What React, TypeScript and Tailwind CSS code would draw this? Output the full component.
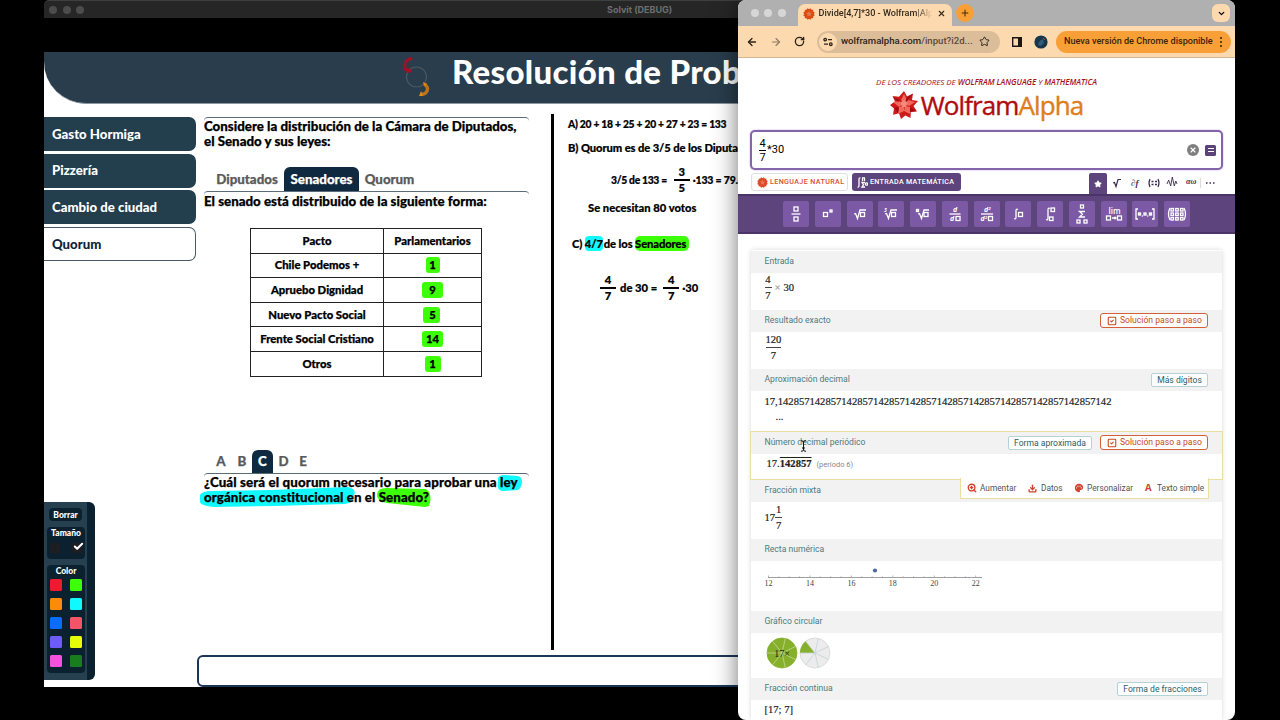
import { useState, type ReactNode } from 'react'
import clsx from 'clsx'
import {
  ArrowLeft,
  ArrowRight,
  Check,
  ChevronDown,
  Download,
  Plus,
  RotateCw,
  SquareCheck,
  Star,
  X,
  ZoomIn,
} from 'lucide-react'
import { MdPalette } from 'react-icons/md'

const lessons = ['Gasto Hormiga', 'Pizzería', 'Cambio de ciudad', 'Quorum']

const senate = [
  { pact: 'Chile Podemos +', seats: '1', mark: 'w-[14px]' },
  { pact: 'Apruebo Dignidad', seats: '9', mark: 'w-[21px]' },
  { pact: 'Nuevo Pacto Social', seats: '5', mark: 'w-[17px] -ml-[3px] pl-[3px]' },
  { pact: 'Frente Social Cristiano', seats: '14', mark: 'w-[21px]' },
  { pact: 'Otros', seats: '1', mark: 'w-[16px]' },
]

const swatches = [
  'bg-[#f01a30]', 'bg-[#3cff08]',
  'bg-[#fb8b08]', 'bg-[#12f8ff]',
  'bg-[#0a6cff]', 'bg-[#f45468]',
  'bg-[#6d5cfa]', 'bg-[#e6ff08]',
  'bg-[#f551dd]', 'bg-[#187d1c]',
]

/* ---------- Solvit ---------- */

function SolvitFraction({ top, bottom }: { top: string; bottom: string }) {
  return (
    <span className="inline-flex w-4 shrink-0 flex-col items-center leading-[12px]">
      <span className="h-[13px]">{top}</span>
      <span className="h-[2px] w-full bg-black" />
      <span className="pt-px">{bottom}</span>
    </span>
  )
}

// Thin rule with both ends curling down, drawn above each block of text.
function CurledRule() {
  return <div className="h-1 w-[325px] rounded-t-[4px] border-t border-[#5b6b78]" />
}

function SolvitHeader() {
  return (
    <header className="flex h-[52px] items-start rounded-bl-[42px] border-b border-[#8b969e] bg-[#293d4c] pl-[357px]">
      <svg width="30" height="44" viewBox="0 0 30 44" className="mt-[3px] shrink-0" fill="none">
        <circle cx="15.500" cy="22" r="10" stroke="#4b5962" strokeWidth="1.2" />
        <path d="M11 3.500 7 4.500 4.500 7.500 3.500 11l1 3 2.500 3" stroke="#a80f22" strokeWidth="3" strokeDasharray="4 .5" />
        <path d="M8 11.500 6 18l5-1z" fill="#a80f22" />
        <path d="M23.500 29c5 4 3.500 10-3.500 10.500" stroke="#bd7315" strokeWidth="3.4" />
        <path d="m18 41 2-5 2 5zM22 27l1 4 3-2z" fill="#e08a13" />
      </svg>
      <h1 className="ml-[21px] text-[33px] leading-[39px] font-black tracking-[0.3px] whitespace-nowrap text-white">
        Resolución de Problemas
      </h1>
    </header>
  )
}

function DrawPalette() {
  return (
    <div className="mt-auto mb-[7px] h-[178px] w-[51px] rounded-r-[6px] border-r-8 border-[#0b2130] bg-[#26404f] px-[3px] py-[6px] text-center text-[8.5px] font-black text-white">
      <button className="ml-[2px] block h-[13px] w-[33px] rounded-[4px] bg-[#0b2130] leading-[12px]">Borrar</button>
      <div className="mt-[6px] h-[32px] w-[38px] rounded-[4px] bg-[#0b2130] leading-[12px]">
        Tamaño
        <div className="mt-[4px] flex justify-between px-[3px]">
          <span className="h-[10px] w-[10px] bg-[#1d1d22]" />
          <span className="h-[10px] w-[10px] bg-[#1d1d22]">
            <Check size={11} strokeWidth={4.5} className="-mt-[2px] ml-px" />
          </span>
        </div>
      </div>
      <div className="mt-[6px] h-[108px] w-[38px] rounded-[4px] bg-[#0b2130] leading-[13px]">
        Color
        <div className="mt-px grid grid-cols-2 gap-y-[7px] px-[3px]">
          {swatches.map((color, i) => (
            <span key={color} className={clsx('h-3 w-3 rounded-[1.5px]', color, i % 2 === 1 && 'justify-self-end')} />
          ))}
        </div>
      </div>
    </div>
  )
}

function Sidebar() {
  const [active, setActive] = useState('Quorum')
  return (
    <nav className="flex w-[152px] flex-col pt-[13px]">
      {lessons.map((lesson) => (
        <button
          key={lesson}
          onClick={() => setActive(lesson)}
          className={clsx(
            'mb-[2.7px] h-[34px] shrink-0 rounded-r-[7px] pt-px pl-2 text-left text-[13.2px] font-black',
            lesson === active
              ? 'border border-l-0 border-[#4a5b6b] bg-white text-[#0d2438]'
              : 'bg-[#233e4d] text-white',
          )}
        >
          {lesson}
        </button>
      ))}
      <DrawPalette />
    </nav>
  )
}

function SenateTable() {
  return (
    <table className="mt-[19px] ml-[46px] w-[232px] table-fixed border-collapse text-center text-[11.3px] font-black">
      <tbody>
        <tr className="h-[24.6px]">
          <td className="w-[133px] border border-[#222] p-0">Pacto</td>
          <td className="border border-[#222] p-0">Parlamentarios</td>
        </tr>
        {senate.map((row) => (
          <tr key={row.pact} className="h-[24.6px]">
            <td className="border border-[#222] p-0 leading-4">{row.pact}</td>
            <td className="border border-[#222] p-0 leading-4">
              <span className={clsx('inline-block h-4 rounded-[3px] bg-[#3cff08]', row.mark)}>{row.seats}</span>
            </td>
          </tr>
        ))}
      </tbody>
    </table>
  )
}

function Exercise() {
  return (
    <section className="w-[348px] pt-[13px] pl-[8px] text-[13.3px] leading-[15px] font-black [-webkit-text-stroke:0.25px]">
      <CurledRule />
      <p className="-mt-[2px] h-[48px] whitespace-nowrap">
        Considere la distribución de la Cámara de Diputados,
        <br />
        el Senado y sus leyes:
      </p>
      <div className="flex h-6 pl-[6px] leading-6 text-[#5a5a5a]">
        <span className="w-[74px] text-center">Diputados</span>
        <span className="w-[75px] rounded-t-[6px] bg-[#0f2a40] text-center text-white">Senadores</span>
        <span className="w-[61px] text-center">Quorum</span>
      </div>
      <CurledRule />
      <p className="-mt-px whitespace-nowrap">El senado está distribuido de la siguiente forma:</p>
      <SenateTable />
      <div className="mt-[73px] flex h-[23px] pl-[6px] text-center leading-[22px] text-[#5a5a5a]">
        <span className="w-[22px]">A</span>
        <span className="w-[20px]">B</span>
        <span className="w-[21px] rounded-t-[6px] bg-[#0f2a40] text-white">C</span>
        <span className="w-[21px]">D</span>
        <span className="w-[18px]">E</span>
      </div>
      <CurledRule />
      <div className="relative -mt-[2px] whitespace-nowrap">
        {/* marker strokes sit under the text */}
        <svg width="332" height="40" viewBox="0 0 332 40" className="absolute -top-px -left-[5px]">
          <path d="M299 4q1-3 6-3l14 1q4 1 4 6t-4 8l-14 1q-6 0-6-4z" fill="#12f8ff" />
          <path d="M1 21q2-4 12-4l60-1 76-3q9 2 6 8 0 8-9 9l-70 2-60 1q-16-1-15-6z" fill="#12f8ff" />
          <path d="M178 20q1-6 9-6l40 1 3 3q3 6 0 14l-4 1-38-4q-11-2-10-9z" fill="#3cff08" />
        </svg>
        <p className="relative">
          <span className="tracking-[0.12px]">¿Cuál será el quorum necesario para aprobar una ley</span>
          <br />
          <span className="tracking-[0.08px]">orgánica constitucional en el Senado?</span>
        </p>
      </div>
    </section>
  )
}

function Solution() {
  return (
    <section className="h-[536px] w-[200px] shrink-0 border-l-[3px] border-black pt-[2px] pl-[14px] text-[11.2px] leading-4 font-black whitespace-nowrap [-webkit-text-stroke:0.2px]">
      <p className="text-[10.3px] tracking-[-0.25px]">A) 20 + 18 + 25 + 20 + 27 + 23 = 133</p>
      <p className="mt-2 tracking-[-0.1px]">B) Quorum es de 3/5 de los Diputados</p>
      <p className="mt-[8px] flex h-8 items-center pl-[43px]">
        <span className="text-[10.3px] tracking-[-0.3px]">3/5 de 133 =</span>
        <span className="w-[7px]" />
        <SolvitFraction top="3" bottom="5" />
        <span className="w-[3px]" />
        <span className="text-[10.5px] tracking-[-0.2px]">·133 = 79.8</span>
      </p>
      <p className="mt-1 pl-[20px]">Se necesitan 80 votos</p>
      <p className="mt-5 pl-[4px] tracking-[-0.1px]">
        C) <span className="rounded-[4px] bg-[#12f8ff] py-px">4/7</span>
        <span className="ml-px">de los </span>
        <span className="rounded-[5px] bg-[#3cff08] py-px pr-[3px]">Senadores</span>
      </p>
      <p className="mt-5 flex h-8 items-center pl-[32px]">
        <SolvitFraction top="4" bottom="7" />
        <span className="w-[4px]" />
        de 30 =<span className="w-[6px]" />
        <SolvitFraction top="4" bottom="7" />
        <span className="w-[3px]" />
        ·30
      </p>
    </section>
  )
}

function SolvitWindow() {
  return (
    <main className="absolute top-0 left-[44px] flex h-[687px] w-[860px] flex-col overflow-hidden bg-black font-['Lato',sans-serif] text-black">
      <div className="flex h-[18px] shrink-0 items-center rounded-tl-[5px] border-t border-[#3c4040] bg-[#262626] pl-[5px]">
        <span className="mr-[5.5px] h-2 w-2 rounded-full bg-[#4c4c4c]" />
        <span className="mr-[5.5px] h-2 w-2 rounded-full bg-[#4c4c4c]" />
        <span className="h-2 w-2 rounded-full bg-[#4c4c4c]" />
        <span className="ml-[523px] font-['Inter',sans-serif] text-[9px] font-bold text-[#6e6e6e]">Solvit (DEBUG)</span>
      </div>
      <div className="mt-[34px] flex min-h-0 grow flex-col bg-white">
        <SolvitHeader />
        <div className="flex min-h-0 grow">
          <Sidebar />
          <div className="flex grow flex-col">
            <div className="flex h-[551px]">
              <Exercise />
              <div className="w-[7px]" />
              <div className="pt-[10px]">
                <Solution />
              </div>
            </div>
            <div className="mr-[10px] ml-px h-[32px] rounded-[6px] border-2 border-[#1b3656] bg-white" />
          </div>
        </div>
      </div>
    </main>
  )
}

/* ---------- Browser ---------- */

function Gear({ size, color }: { size: number; color: string }) {
  return (
    <svg width={size} height={size} viewBox="0 0 20 20" className="shrink-0">
      {[0, 30, 60].map((a) => (
        <rect key={a} x="3" y="3" width="14" height="14" fill={color} transform={`rotate(${a} 10 10)`} />
      ))}
      <path d="m10 5 1.4 3 3.4.3-2.4 2.4.6 3.5-3-1.7-3 1.7.6-3.5-2.4-2.4 3.4-.3z" fill="#fff" opacity=".25" />
    </svg>
  )
}

function TabStrip() {
  return (
    <div className="flex h-[26px] shrink-0 bg-[#b0b0b0] pl-[13px]">
      <div className="flex items-center gap-[5.3px]">
        {[0, 1, 2].map((i) => (
          <span key={i} className="h-2 w-2 rounded-full bg-[#d6d6d6]" />
        ))}
      </div>
      <div className="mt-1 ml-[12px] flex w-[154px] items-center rounded-t-[7px] bg-[#fcd9ae] pb-[3px] pl-[5px] text-[#33291e]">
        <Gear size={12} color="#dd4a14" />
        <span className="ml-[4px] w-[113px] text-[9.1px] font-medium whitespace-nowrap [mask-image:linear-gradient(90deg,#000_85%,transparent)]">
          Divide[4,7]*30 - Wolfram|Alp
        </span>
        <X size={9} strokeWidth={3} className="ml-[5px] shrink-0" />
      </div>
      <span className="mt-1 ml-[4px] grid h-[18px] w-[18px] place-items-center rounded-full bg-[#f89f37]">
        <Plus size={10} strokeWidth={2.6} className="text-[#4a2b08]" />
      </span>
      <span className="mt-1 mr-[5px] ml-auto grid h-[18px] w-[18px] place-items-center rounded-[6px] bg-[#fcd9ae]">
        <ChevronDown size={9} strokeWidth={3.4} className="text-black" />
      </span>
    </div>
  )
}

function AddressBar() {
  return (
    <div className="flex h-8 shrink-0 items-center border-b border-[#d3b793] bg-[#fcd9ae] pl-[8px] text-[#2c231a]">
      <ArrowLeft size={12} strokeWidth={2.6} />
      <ArrowRight size={12} strokeWidth={2.2} className="ml-[12px] text-[#8e7a63]" />
      <RotateCw size={11} strokeWidth={2.9} className="ml-[12px]" />
      <div className="ml-[12px] flex h-[22px] w-[183px] items-center rounded-full bg-[#dcbd99] pl-[2px]">
        <span className="grid h-[18px] w-[18px] place-items-center rounded-full bg-[#fcd9ae]">
          <svg width="10" height="10" viewBox="0 0 10 10" fill="none" stroke="#2c231a" strokeWidth="1.3">
            <circle cx="2.2" cy="2.6" r="1.3" />
            <path d="M5 2.6h4M1 7.2h4" />
            <circle cx="7.8" cy="7.2" r="1.3" />
          </svg>
        </span>
        <span className="ml-[4px] w-[132px] text-[9.6px] font-medium whitespace-nowrap">
          wolframalpha.com<span className="text-[#5b4a38]">/input?i2d...</span>
        </span>
        <Star size={11} strokeWidth={2.1} className="ml-[6px]" />
      </div>
      <svg width="10" height="10" viewBox="0 0 10 10" className="ml-[12px]">
        <path d="M.7.7h8.6v8.6H.7z" fill="none" stroke="#1d1712" strokeWidth="1.4" />
        <path d="M6 1h3.4v8H6z" fill="#1d1712" />
      </svg>
      <svg width="14" height="14" viewBox="0 0 14 14" className="ml-[12px]">
        <circle cx="7" cy="7" r="6.6" fill="#17364b" />
        <path d="M4 10q1-5 5-6l1 4-3 3z" fill="#2f5c78" />
        <path d="m9 3 2 2" stroke="#b34646" />
      </svg>
      <div className="ml-[8px] flex h-[22px] w-[175px] items-center rounded-full bg-[#f89f37] pl-[8px] text-[9.1px] font-medium whitespace-nowrap text-[#3b2307]">
        <span className="w-[149px]">Nueva versión de Chrome disponible</span>
        <span className="ml-[5px] flex w-[6px] flex-col items-center gap-[2px]">
          {[0, 1, 2].map((i) => (
            <i key={i} className="h-[2px] w-[2px] rounded-full bg-[#3b2307]" />
          ))}
        </span>
      </div>
    </div>
  )
}

/* ---------- WolframAlpha ---------- */

function Spikey() {
  return (
    <svg width="28" height="28" viewBox="0 0 28 28">
      <path
        d="m14 0 3 5.500 6-3-1 6.500 6 1-4.500 5 3.500 5.500-6.200.500-.3 6-5.200-2.500L11 28l-2-5.700-6 1.400 1-6.200L0 14l5-3.500L2.500 5 9 5.700z"
        fill="#cf1a1a"
      />
      <path d="m14 3 3 6-3 4-3-4zM25 11l-6 4-4-2 3-4zM20 23l-6-3 1-5 5 1zM8 23l1-7 5-1v5zM3 11l6-1 4 3-4 3z" fill="#f2685c" />
      <path d="m14 14 4-5 5-6-6 3zM9 16l-5 1 4 5zM10 9 3 6l5 5zM20 16l6 4-6 1z" fill="#a30d12" />
      <path d="m14 9 3.500 2.500L16 16h-4l-1.500-4.500z" fill="#f58a7c" />
    </svg>
  )
}

function Box({ x, y, s = 4 }: { x: number; y: number; s?: number }) {
  return <rect x={x} y={y} width={s} height={s} />
}

function Glyph({ x, y, size = 7, children }: { x: number; y: number; size?: number; children: ReactNode }) {
  return (
    <text x={x} y={y} fontSize={size} fill="#fff" stroke="none" fontStyle="italic" fontWeight="700">
      {children}
    </text>
  )
}

// Templates of the math keyboard, each on a 26x26 key.
const keys: ReactNode[] = [
  <><Box x={11} y={6} /><path d="M8.500 13h9" /><Box x={11} y={16} /></>,
  <><Box x={8.500} y={11.500} /><Box x={15} y={9} s={2} /></>,
  <><path d="m7 13 1.500-.5 2 5L13 9h6" /><Box x={13.500} y={11.500} /></>,
  <><path d="m7 13 1.500-.5 2 5L13 9h6" /><Box x={13.500} y={11.500} /><Glyph x={6} y={11} size={5}>3</Glyph></>,
  <><path d="m8 13 1.500-.5 2 5L14 9h5" /><Box x={14} y={11.500} /><Box x={6.500} y={8.500} s={2} /></>,
  <><Glyph x={11} y={11}>d</Glyph><path d="M7.500 13h11" /><Glyph x={8} y={20}>d</Glyph><Box x={14} y={15.500} /></>,
  <><Glyph x={10} y={11}>d</Glyph><Glyph x={14.500} y={8.500} size={4}>2</Glyph><path d="M7 13h12" /><Glyph x={6.500} y={20}>d</Glyph><Glyph x={11} y={18} size={4}>2</Glyph><Box x={14.500} y={15.500} /></>,
  <><path d="M13 8.500q-2-1-2 1.500v6q0 2.500-2 1.500" /><Box x={13.500} y={11.500} /></>,
  <><path d="M13 7.500q-2-1-2 1.500v8q0 2.500-2 1.500" /><Box x={14} y={7} s={3.500} /><Box x={12.500} y={16} s={3.500} /></>,
  <><Box x={11.500} y={4} s={3} /><path d="M16 10.500h-5.500l3 2.700-3 2.800H16" /><Box x={8} y={19} s={3} /><Box x={15} y={19} s={3} /></>,
  <><text x="7.500" y="12.500" fontSize="8" fontWeight="600" fill="#fff" stroke="none">lim</text><Box x={5.500} y={15} /><path d="M11 17h4m-1.500-1.300L15 17l-1.500 1.300" /><Box x={16.500} y={15} /></>,
  <><path d="M6 8H4v10h2M20 8h2v10h-2" /><Box x={6.500} y={12} s={2} /><Box x={12} y={12} s={2} /><Box x={17.500} y={12} s={2} /><path d="M10.300 14v2M15.800 14v2" strokeWidth=".8" /></>,
  <><path d="M6 7q-3 6 0 12M20 7q3 6 0 12" />{[7.500, 12, 16.500].map((y) => [7, 11.700, 16.500].map((x) => <Box key={`${x}-${y}`} x={x} y={y} s={2.500} />))}</>,
]

function MathKeyboard() {
  return (
    <div className="flex h-10 items-center gap-[5.75px] border-y-2 border-[#4b3468] bg-[#5d447c] pl-[45px]">
      {keys.map((key, i) => (
        <button key={i} className="h-[26px] w-[26px] rounded-[2px] bg-[#7b59a4]">
          <svg width="26" height="26" viewBox="0 0 26 26" fill="none" stroke="#fff" strokeWidth="1.3" className="font-['Open_Sans',sans-serif]">
            {key}
          </svg>
        </button>
      ))}
    </div>
  )
}

function QueryBox() {
  return (
    <div className="mx-[12px] mt-[9px] flex h-10 items-center rounded-[5px] border-2 border-[#8464ab] bg-white pl-[7px] text-[11px] text-black shadow-[0_0_2px_#bda6dc]">
      <span className="flex w-[7px] flex-col items-center leading-[13px]">
        <span>4</span>
        <span className="h-px w-full bg-black" />
        <span>7</span>
      </span>
      <span className="ml-px">*30</span>
      <span className="mr-[6px] ml-auto grid h-3 w-3 place-items-center rounded-full bg-[#7f7f7f]">
        <X size={8} strokeWidth={3.4} className="text-white" />
      </span>
      <span className="mr-[5px] flex h-[11px] w-[11px] flex-col items-center justify-center gap-[2px] rounded-[1.5px] bg-[#5b4279]">
        <i className="h-px w-[6px] bg-white" />
        <i className="h-px w-[6px] bg-white" />
      </span>
    </div>
  )
}

function InputModes() {
  return (
    <div className="mt-[3px] flex h-[21px] pr-[18px] pl-[13px] text-[7.1px] font-medium">
      <button className="flex h-[18px] w-[97px] items-center rounded-[3px] border border-[#e0e0e0] bg-white pl-[5px] tracking-[0.4px] whitespace-nowrap text-[#d6502c]">
        <Gear size={11} color="#dd4a24" />
        <span className="ml-[2px]">LENGUAJE NATURAL</span>
      </button>
      <button className="ml-[4px] flex h-[18px] w-[109px] items-center rounded-[3px] bg-[#5d447c] pl-[5px] tracking-[0.32px] whitespace-nowrap text-white">
        <svg width="11" height="11" viewBox="0 0 11 11" fill="none" stroke="#fff" strokeWidth="1.3" className="shrink-0">
          <path d="M3.500 1Q2 .5 2 2.500v6Q2 10.500.5 10M5 .8h3M5.500 1v3M7.500 1v3M8 5.500H5L6.500 7.700 5 10h3" />
          <circle cx="9.500" cy="7" r="1.200" />
        </svg>
        <span className="ml-[2px]">ENTRADA MATEMÁTICA</span>
      </button>
      <div className="ml-auto flex items-start text-[#3d2c55]">
        <span className="grid h-[21px] w-[18px] place-items-center rounded-t-[2px] bg-[#5d447c]">
          <Star size={8} fill="#fff" className="text-white" />
        </span>
        <svg width="110" height="20" viewBox="0 0 110 20" fill="none" stroke="#3d2c55" strokeWidth="1.2" className="font-['Liberation_Serif',serif]">
          <path d="m6 10 1.500-.5 1.500 4L11 6.500h3" />
          <text x="24" y="13" fontSize="9" fontStyle="italic" fontWeight="700" fill="#3d2c55" stroke="none">∂f</text>
          <path d="M43 6q-2 4 0 8M51 6q2 4 0 8" />
          <path d="M44.500 8.500h2m1.500 0h2M44.500 11.500h2m1.500 0h2" strokeWidth="1.700" />
          <path d="m60 11 1.700-4 2 6 1.600-9 2 9 1.500-5 1.200 3" strokeWidth=".9" />
          <text x="79" y="11" fontSize="8" fontStyle="italic" fontWeight="700" fill="#3d2c55" stroke="none">αω</text>
          <path d="M93.500 5v10" stroke="#ddd" />
          <path d="M99 10h1.500m2 0h1.500m2 0h1.500" strokeWidth="1.500" />
        </svg>
      </div>
    </div>
  )
}

function StepButton() {
  return (
    <button className="flex h-[15px] w-[108px] items-center rounded-[3px] border border-[#d2603c] bg-white pl-[6px] whitespace-nowrap text-[#c8491d]">
      <SquareCheck size={10} strokeWidth={2.6} className="shrink-0" />
      <span className="ml-[3px]">Solución paso a paso</span>
    </button>
  )
}

function PodButton({ className, children }: { className: string; children: ReactNode }) {
  return (
    <button className={clsx('h-[14px] rounded-[2px] border border-[#b5d3d6] bg-white text-center leading-[12px] whitespace-nowrap text-[#2c5c66]', className)}>
      {children}
    </button>
  )
}

interface PodProps {
  title: string
  className: string
  actions?: ReactNode
  children: ReactNode
}

function Pod({ title, className, actions, children }: PodProps) {
  return (
    <section className={clsx('flex shrink-0 flex-col', className)}>
      <div className="flex h-[22px] shrink-0 items-center gap-2 bg-[#f2f2f2] pr-[14px] pb-px pl-[13.500px] text-[8.6px]">
        <h2 className="mr-auto text-[#4f7a80]">{title}</h2>
        {actions}
      </div>
      <div className="relative grow pl-[13.500px] font-['Liberation_Serif',serif] text-[10.6px] text-[#222] [-webkit-text-stroke:0.2px]">
        {children}
      </div>
    </section>
  )
}

function Fraction({ top, bottom, className }: { top: string; bottom: string; className?: string }) {
  return (
    <span className={clsx('inline-flex flex-col items-center leading-[14px]', className)}>
      <span>{top}</span>
      <span className="h-px w-full bg-[#444]" />
      <span className="pt-px">{bottom}</span>
    </span>
  )
}

function NumberLine() {
  return (
    <svg width="222" height="24" viewBox="0 0 222 24" className="mt-[4px]">
      <path d="M3 12.500h214" stroke="#888" strokeWidth=".8" />
      {Array.from({ length: 21 }, (_, i) => (
        <path key={i} d={`M${3.500 + i * 10.36} ${i % 4 === 0 ? 10.500 : 11.300}v1.800`} stroke="#999" strokeWidth=".7" />
      ))}
      <circle cx="110" cy="5.500" r="2.100" fill="#4a6a9b" stroke="none" />
      {[12, 14, 16, 18, 20, 22].map((n, i) => (
        <text key={n} x={3.500 + i * 41.44} y="21" fontSize="8" textAnchor="middle" fill="#444" stroke="none">
          {n}
        </text>
      ))}
    </svg>
  )
}

function point(i: number, r: number) {
  const a = Math.PI + (i * 2 * Math.PI) / 7
  return `${(16 + r * Math.cos(a)).toFixed(2)} ${(16 + r * Math.sin(a)).toFixed(2)}`
}

function Pie({ filled, label }: { filled: number; label?: string }) {
  const whole = filled === 7
  return (
    <svg width="32" height="32" viewBox="0 0 32 32">
      <circle cx="16" cy="16" r="15" fill={whole ? '#86b02c' : '#ececec'} stroke={whole ? '#86b02c' : '#d6d6d6'} strokeWidth=".8" />
      {!whole && <path d={`M16 16 ${point(0, 15)}A15 15 0 0 1 ${point(filled, 15)}z`} fill="#86b02c" />}
      {[0, 1, 2, 3, 4, 5, 6].map((i) => (
        <path key={i} d={`M16 16 ${point(i, 15)}`} stroke={whole ? '#c3d893' : '#c4d2d6'} strokeWidth=".8" />
      ))}
      {label && (
        <text x="16" y="19.500" fontSize="10" textAnchor="middle" fill="#1c2a10">
          {label}
        </text>
      )}
    </svg>
  )
}

function PodToolbar() {
  return (
    <div className="absolute top-[24px] right-[13px] z-10 flex h-[21px] w-[249px] items-center border border-t-0 border-[#ecdda0] bg-white font-['Roboto',sans-serif] text-[8.3px] whitespace-nowrap text-[#555] [-webkit-text-stroke:0]">
      <ZoomIn size={10} strokeWidth={3.2} className="ml-[6px] shrink-0 text-[#d1412c]" />
      <span className="ml-[3px] w-[43px]">Aumentar</span>
      <Download size={9} strokeWidth={3.6} className="ml-[5px] shrink-0 text-[#d1412c]" />
      <span className="ml-[4px] w-[29px]">Datos</span>
      <MdPalette size={10} className="ml-[4px] shrink-0 text-[#d1412c]" />
      <span className="ml-[3px] w-[54px]">Personalizar</span>
      <b className="ml-[4px] w-[12px] font-['Liberation_Mono',monospace] text-[11px] text-[#d1412c]">A</b>
      <span>Texto simple</span>
    </div>
  )
}

function Results() {
  return (
    <div className="mx-[13px] mt-[16px] flex grow flex-col rounded-t-[3px] bg-white shadow-[0_0_5px_rgba(0,0,0,0.16)]">
      <Pod title="Entrada" className="h-[60px] pt-px">
        <div className="flex items-center">
          <Fraction top="4" bottom="7" className="w-[7px]" />
          <span className="mx-[3px] text-[#999]">×</span>30
        </div>
      </Pod>
      <Pod title="Resultado exacto" className="h-[59px]" actions={<StepButton />}>
        <Fraction top="120" bottom="7" className="ml-px" />
      </Pod>
      <Pod title="Aproximación decimal" className="h-[62px]" actions={<PodButton className="w-[57px]">Más dígitos</PodButton>}>
        <p className="mt-[3px] leading-[16px]">17,142857142857142857142857142857142857142857142857142857142857142</p>
        <p className="pl-[11px] leading-[13px]">...</p>
      </Pod>
      <Pod
        title="Número decimal periódico"
        className="-mx-px h-[49px] border border-[#ecdda0]"
        actions={
          <>
            <PodButton className="w-[84px]">Forma aproximada</PodButton>
            <StepButton />
          </>
        }
      >
        <p className="pl-[2px] leading-[20px]">
          17.<span className="font-bold overline decoration-1">142857</span>
          <span className="ml-[5px] font-['Roboto',sans-serif] text-[7.5px] text-[#888] [-webkit-text-stroke:0]">(período 6)</span>
        </p>
        <PodToolbar />
      </Pod>
      <Pod title="Fracción mixta" className="h-[59px]">
        <div className="mt-px flex items-center">
          17
          <Fraction top="1" bottom="7" className="w-[7px]" />
        </div>
      </Pod>
      <Pod title="Recta numérica" className="h-[72px]">
        <NumberLine />
      </Pod>
      <Pod title="Gráfico circular" className="h-[67px]">
        <div className="mt-[4px] ml-px flex gap-[1px]">
          <Pie filled={7} label="17×" />
          <Pie filled={1} />
        </div>
      </Pod>
      <Pod title="Fracción continua" className="h-[42px]" actions={<PodButton className="w-[91px]">Forma de fracciones</PodButton>}>
        <p className="leading-[20px]">[17; 7]</p>
      </Pod>
    </div>
  )
}

function BrowserWindow() {
  return (
    <div className="absolute top-0 left-[738px] flex h-[720px] w-[497px] flex-col overflow-hidden rounded-[8px] bg-white font-['Roboto',sans-serif] shadow-[0_0_24px_rgba(0,0,0,0.55)]">
      <TabStrip />
      <AddressBar />
      <div className="flex min-h-0 grow flex-col">
        <p className="mt-[17px] text-center font-['Open_Sans',sans-serif] text-[8px] leading-[14px] tracking-[-0.05px] whitespace-nowrap text-[#a8131c] italic">
          DE LOS CREADORES DE <b className="font-semibold">WOLFRAM LANGUAGE</b> Y <b className="font-semibold">MATHEMATICA</b>
        </p>
        <div className="mt-px mb-px flex h-[30px] items-center justify-center font-['Open_Sans',sans-serif] text-[26px] leading-[30px] font-medium tracking-[-0.9px] text-[#b00c10] [-webkit-text-stroke:0.4px]">
          <Spikey />
          <span className="ml-[3px]">Wolfram</span>
          <span className="text-[#dd7d1c]">Alpha</span>
        </div>
        <QueryBox />
        <InputModes />
        <MathKeyboard />
        <Results />
      </div>
    </div>
  )
}

export default function App() {
  return (
    <div className="relative h-[720px] w-[1280px] overflow-hidden bg-black">
      <SolvitWindow />
      <BrowserWindow />
      {/* text cursor */}
      <svg width="7" height="12" viewBox="0 0 7 12" className="absolute top-[440px] left-[800px]" fill="none" stroke="#111">
        <path d="M1 .7q2.500 0 2.500 1.500v7.600q0 1.500-2.500 1.500M6 .7Q3.500.7 3.500 2.200v7.600q0 1.500 2.500 1.500M2 8h3" />
      </svg>
    </div>
  )
}
